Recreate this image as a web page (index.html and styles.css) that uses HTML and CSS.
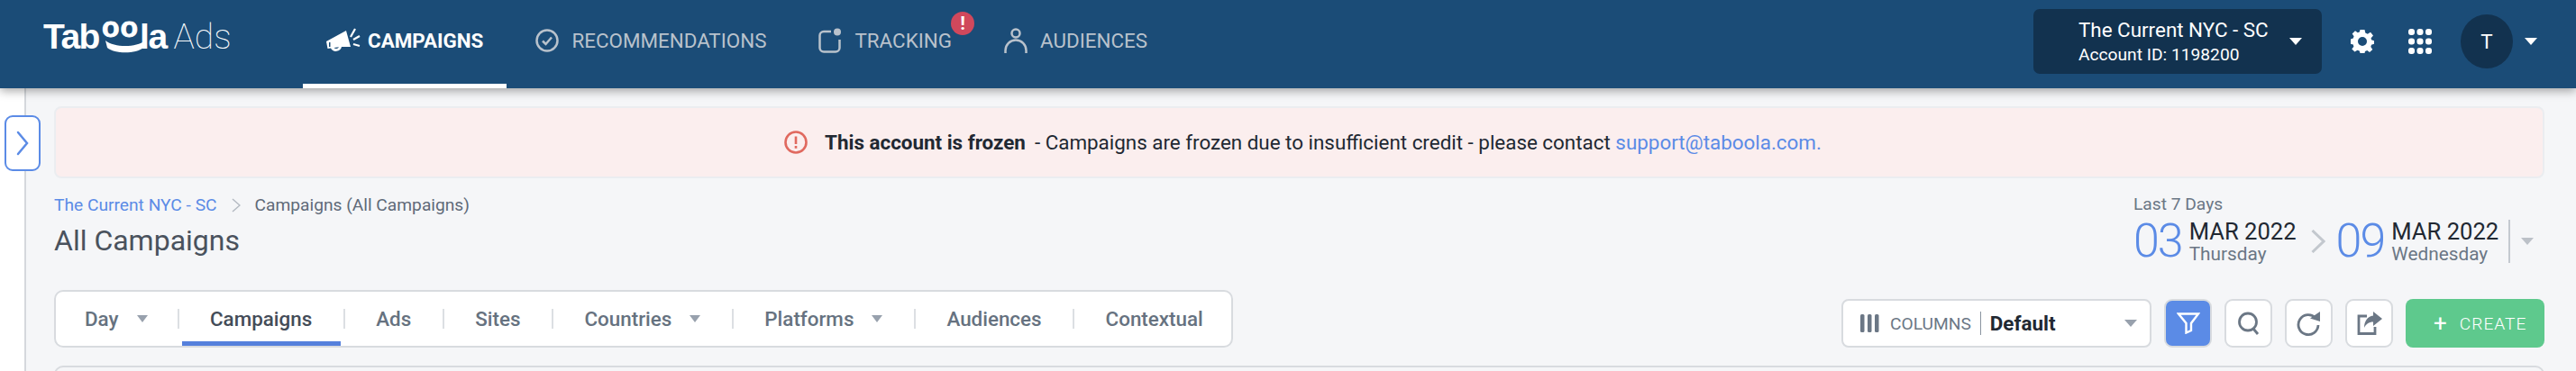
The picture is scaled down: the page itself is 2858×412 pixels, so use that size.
FILE: index.html
```html
<!DOCTYPE html>
<html lang="en">
<head>
    <meta charset="UTF-8">
    <title>Taboola Ads - Campaigns</title>
    <link rel="stylesheet" href="styles.css">
</head>
<body>
    <!-- Top Bar -->
    <header class="top-bar">
        <div class="logo">
            <span class="logo-name">Tab<span class="logo-oo">oo</span>la</span>
            <svg class="logo-smile" width="44" height="14" viewBox="0 0 44 14"><path d="M0 0 C10 8 34 8 44 0 L42 8 C34 15 10 15 2 8 Z" fill="#fff"/></svg>
            <span class="logo-ads">Ads</span>
        </div>
        <nav class="main-nav">
            <a class="nav-item active">
                <svg width="38" height="28" viewBox="0 0 38 28" fill="#fff"><path d="M0 15 L22 3 L27 21 L17 21 A6.500 6.500 0 0 1 5 22.500 L1.500 23 Z M8.500 22 A3.500 3.500 0 0 0 14 21.300 Z"/><rect x="3" y="16" width="1.500" height="5" fill="#1b4c77"/><path d="M27 10 L32 1 M30 13 L37 9 M30 18 L37 20" stroke="#fff" stroke-width="2.200" fill="none"/></svg>
                <span>CAMPAIGNS</span>
            </a>
            <a class="nav-item">
                <svg width="26" height="28" viewBox="0 0 26 28" fill="none" stroke="#b9c2cc" stroke-width="2.500"><circle cx="13" cy="14" r="11.500"/><path d="M8 14.500 L11.500 18 L18 10.500"/></svg>
                <span>RECOMMENDATIONS</span>
            </a>
            <a class="nav-item">
                <svg width="26" height="28" viewBox="0 0 26 28" fill="none" stroke="#b9c2cc" stroke-width="2.500"><path d="M14 4 H6 A4.500 4.500 0 0 0 1.500 8.500 V22 A4.500 4.500 0 0 0 6 26.500 H19 A4.500 4.500 0 0 0 23.500 22 V13"/><circle cx="21" cy="4.500" r="4" fill="#b9c2cc" stroke="none"/></svg>
                <span>TRACKING</span>
                <span class="nav-badge">!</span>
            </a>
            <a class="nav-item">
                <svg width="26" height="28" viewBox="0 0 26 28" fill="none" stroke="#b9c2cc" stroke-width="2.500"><circle cx="13" cy="6" r="4.500"/><path d="M1.500 28 V25 A11.500 11.500 0 0 1 24.500 25 V28"/></svg>
                <span>AUDIENCES</span>
            </a>
        </nav>
        <div class="top-right">
            <div class="account-box">
                <div class="account-text">
                    <div class="account-name">The Current NYC - SC</div>
                    <div class="account-id">Account ID: 1198200</div>
                </div>
                <span class="caret caret-white"></span>
            </div>
            <svg class="gear-icon" width="26" height="26" viewBox="0 0 26 26"><path fill="#fff" fill-rule="evenodd" d="M10.500 0 H15.500 L16.300 3.600 L18.800 4.700 L22 2.800 L25 6.500 L22.600 9.200 L23 11.200 L26 12.200 V15.800 L23 16.800 L22.300 19 L24.300 22 L21 25 L18.300 23 L16 24 L15.500 26 H10.500 L9.700 23.600 L7.400 22.800 L4.500 24.600 L1.300 21.500 L3.400 18.800 L2.800 16.600 L0 15.800 V10.500 L2.800 9.500 L3.600 7.200 L1.700 4.400 L5 1.300 L7.800 3.300 L9.800 2.600 Z M13 8 A5 5 0 1 0 13 18 A5 5 0 1 0 13 8 Z"/></svg>
            <svg class="grid-icon" width="26" height="28" viewBox="0 0 26 28" fill="#fff">
                <rect x="0" y="0" width="7" height="7" rx="3"/><rect x="9.500" y="0" width="7" height="7" rx="3"/><rect x="19" y="0" width="7" height="7" rx="3"/>
                <rect x="0" y="10.500" width="7" height="7" rx="3"/><rect x="9.500" y="10.500" width="7" height="7" rx="3"/><rect x="19" y="10.500" width="7" height="7" rx="3"/>
                <rect x="0" y="21" width="7" height="7" rx="3"/><rect x="9.500" y="21" width="7" height="7" rx="3"/><rect x="19" y="21" width="7" height="7" rx="3"/>
            </svg>
            <div class="avatar">T</div>
            <span class="caret caret-white"></span>
        </div>
    </header>

    <div class="page">
        <!-- Side Panel -->
        <aside class="side-panel">
            <button class="side-toggle">
                <svg width="14" height="30" viewBox="0 0 14 30" fill="none" stroke="#5b8be6" stroke-width="2.500" stroke-linecap="round"><path d="M2 3 L12 15 L2 27"/></svg>
            </button>
        </aside>

        <main class="content">
            <!-- Frozen Notice -->
            <div class="notice">
                <svg width="26" height="26" viewBox="0 0 26 26" fill="none"><circle cx="13" cy="13" r="11.500" stroke="#e0695f" stroke-width="2.600"/><path d="M13 6.500 V15" stroke="#e0695f" stroke-width="2.600"/><rect x="11.700" y="17" width="2.600" height="2.800" fill="#e0695f"/></svg>
                <b>This account is frozen</b>
                <span>- Campaigns are frozen due to insufficient credit - please contact <a>support@taboola.com.</a></span>
            </div>

            <div class="title-row">
                <div>
                    <div class="breadcrumb">
                        <a>The Current NYC - SC</a>
                        <svg width="10" height="16" viewBox="0 0 10 16" fill="none" stroke="#b4bac2" stroke-width="1.500"><path d="M1 1 L9 8 L1 15"/></svg>
                        <span>Campaigns (All Campaigns)</span>
                    </div>
                    <h1>All Campaigns</h1>
                </div>
                <div class="date-range">
                    <div class="date-label">Last 7 Days</div>
                    <div class="date-row">
                        <span class="date-day">03</span>
                        <div class="date-info">
                            <div class="date-month">MAR 2022</div>
                            <div class="date-weekday">Thursday</div>
                        </div>
                        <svg class="date-arrow" width="16" height="26" viewBox="0 0 16 26" fill="none" stroke="#c3c8ce" stroke-width="3"><path d="M1.500 1 L14 13 L1.500 25"/></svg>
                        <span class="date-day">09</span>
                        <div class="date-info">
                            <div class="date-month">MAR 2022</div>
                            <div class="date-weekday">Wednesday</div>
                        </div>
                        <span class="date-sep"></span>
                        <span class="caret caret-light"></span>
                    </div>
                </div>
            </div>

            <div class="toolbar">
                <div class="tabs">
                    <div class="tab">Day<span class="caret caret-grey"></span></div>
                    <span class="tab-sep"></span>
                    <div class="tab active">Campaigns</div>
                    <span class="tab-sep"></span>
                    <div class="tab">Ads</div>
                    <span class="tab-sep"></span>
                    <div class="tab">Sites</div>
                    <span class="tab-sep"></span>
                    <div class="tab">Countries<span class="caret caret-grey"></span></div>
                    <span class="tab-sep"></span>
                    <div class="tab">Platforms<span class="caret caret-grey"></span></div>
                    <span class="tab-sep"></span>
                    <div class="tab">Audiences</div>
                    <span class="tab-sep"></span>
                    <div class="tab">Contextual</div>
                </div>
                <div class="actions">
                    <div class="columns-select">
                        <svg width="21" height="20" viewBox="0 0 21 20" fill="#6b7785"><rect x="0" width="4.500" height="20" rx="1.500"/><rect x="8" width="4.500" height="20" rx="1.500"/><rect x="16" width="4.500" height="20" rx="1.500"/></svg>
                        <span class="columns-label">COLUMNS</span>
                        <span class="columns-sep"></span>
                        <b>Default</b>
                        <span class="caret caret-grey"></span>
                    </div>
                    <button class="icon-btn filter-btn">
                        <svg width="26" height="24" viewBox="0 0 26 24" fill="none" stroke="#fff" stroke-width="2.400"><path d="M2 1.500 H24 L16 12 V20 L10.500 22.500 V12 Z"/></svg>
                    </button>
                    <button class="icon-btn">
                        <svg width="26" height="26" viewBox="0 0 26 26" fill="none" stroke="#6b7785" stroke-width="2.800"><circle cx="12" cy="11.500" r="9.500"/><path d="M18 19 L23 25"/></svg>
                    </button>
                    <button class="icon-btn">
                        <svg width="28" height="28" viewBox="0 0 28 28" fill="none"><path d="M21 8 A11 11 0 1 0 24 16" stroke="#6b7785" stroke-width="2.800"/><path d="M15 8.500 L26 1 V12 Z" fill="#6b7785"/></svg>
                    </button>
                    <button class="icon-btn">
                        <svg width="28" height="26" viewBox="0 0 28 26" fill="none"><path d="M11 5 H2 V24.500 H20 V17" stroke="#6b7785" stroke-width="2.800"/><path d="M18 0 L28 8 L18 16 V11.500 C13 11.500 10 14 8 18 C8 11 11.500 5.500 18 4.500 Z" fill="#6b7785"/></svg>
                    </button>
                    <button class="create-btn"><span class="create-plus">+</span>CREATE</button>
                </div>
            </div>

            <div class="table-card"></div>
        </main>
    </div>
</body>
</html>
```

FILE: styles.css
```css
/* Basic reset and font setup */
* {
    margin: 0;
    padding: 0;
    box-sizing: border-box;
}

html, body {
    height: 412px;
    overflow: hidden;
}

body {
    font-family: Roboto, 'Liberation Sans', sans-serif;
    background-color: #f5f6f8;
    color: #212832;
}

button {
    font-family: inherit;
    cursor: pointer;
}

/* Carets */
.caret {
    display: inline-block;
    width: 0;
    height: 0;
    border-left: 7px solid transparent;
    border-right: 7px solid transparent;
    border-top: 8px solid #fff;
}

.caret-grey {
    border-top-color: #98a1ad;
}

.caret-light {
    border-top-color: #bcc1c8;
}

/* Top Bar */
.top-bar {
    position: relative;
    z-index: 10;
    height: 98px;
    display: flex;
    align-items: flex-start;
    padding-left: 48px;
    background-color: #1b4c77;
    box-shadow: 0 3px 10px rgba(0, 0, 0, 0.35);
}

.logo {
    position: relative;
    flex: 0 0 288px;
    height: 98px;
    display: flex;
    align-items: baseline;
    padding-top: 18px;
    color: #fff;
}

.logo-name {
    font-family: 'Liberation Sans', sans-serif;
    font-weight: 700;
    font-size: 39px;
    line-height: 46px;
    letter-spacing: -1.500px;
}

.logo-oo {
    display: inline-block;
    font-size: 32px;
    letter-spacing: 1px;
    margin: 0 1px 0 3px;
    transform: translateY(-13px);
    -webkit-text-stroke: 0.8px #fff;
}

.logo-smile {
    position: absolute;
    left: 69px;
    top: 45px;
}

.logo-ads {
    margin-left: 8px;
    font-weight: 100;
    font-size: 39px;
    line-height: 46px;
}

.main-nav {
    display: flex;
    height: 98px;
}

.nav-item {
    position: relative;
    display: flex;
    align-items: center;
    gap: 14px;
    height: 98px;
    padding: 0 26px 8px;
    margin-right: 6px;
    font-size: 22.4px;
    color: #b9c2cc;
}

.nav-item.active {
    gap: 8px;
    color: #fff;
    font-weight: 700;
    border-bottom: 5px solid #fff;
    padding-bottom: 3px;
}

.nav-badge {
    position: absolute;
    top: 13px;
    right: 1px;
    width: 26px;
    height: 26px;
    border-radius: 50%;
    background-color: #d0485c;
    color: #fff;
    font-size: 21px;
    font-weight: 700;
    line-height: 26px;
    text-align: center;
}

.top-right {
    margin-left: auto;
    display: flex;
    align-items: center;
    height: 92px;
    padding-right: 43px;
}

.account-box {
    width: 320px;
    height: 72px;
    display: flex;
    align-items: center;
    justify-content: space-between;
    padding: 0 22px 0 50px;
    border-radius: 7px;
    background-color: #12324f;
    color: #fff;
}

.account-name {
    font-size: 22.4px;
    line-height: 30px;
}

.account-id {
    font-size: 19.2px;
    line-height: 26px;
}

.gear-icon {
    margin-left: 32px;
}

.grid-icon {
    margin-left: 38px;
}

.avatar {
    width: 58px;
    height: 60px;
    margin: 0 13px 0 32px;
    border-radius: 50%;
    background-color: #12324f;
    color: #fff;
    font-size: 22.4px;
    line-height: 60px;
    text-align: center;
}

/* Page */
.page {
    display: flex;
    height: 314px;
    background-color: #f5f6f8;
}

.side-panel {
    position: relative;
    flex: 0 0 29px;
    background-color: #fff;
    border-right: 2px solid #d5d8dc;
}

.side-toggle {
    position: absolute;
    left: 5px;
    top: 30px;
    width: 40px;
    height: 62px;
    display: flex;
    align-items: center;
    justify-content: center;
    background-color: #fff;
    border: 2px solid #5b8be6;
    border-radius: 9px;
}

.content {
    flex: 1;
    min-width: 0;
    padding: 20px 35px 0 31px;
}

/* Frozen Notice */
.notice {
    height: 80px;
    display: flex;
    align-items: center;
    justify-content: center;
    padding-left: 8px;
    border: 2px solid #ebedf0;
    border-radius: 8px;
    background-color: #fbeeee;
    font-size: 22.4px;
}

.notice b {
    margin: 0 10px 0 19px;
    font-weight: 700;
}

.notice a {
    color: #5b8be6;
}

/* Title Row */
.title-row {
    display: flex;
    justify-content: space-between;
    height: 124px;
}

.breadcrumb {
    display: flex;
    align-items: center;
    gap: 16px;
    margin-top: 19px;
    font-size: 19.2px;
    line-height: 22px;
    color: #5f6a78;
}

.breadcrumb a {
    color: #5b8be6;
}

h1 {
    margin-top: 9px;
    font-size: 32px;
    font-weight: 400;
    line-height: 38px;
    color: #4a525d;
}

.date-range {
    margin-top: 18px;
    width: 458px;
}

.date-label {
    padding-left: 2px;
    font-size: 19.2px;
    line-height: 22px;
    color: #6b7785;
}

.date-row {
    display: flex;
    align-items: center;
    margin-top: 5px;
    height: 50px;
    white-space: nowrap;
}

.date-day {
    margin-left: 2px;
    font-size: 52px;
    font-weight: 300;
    line-height: 50px;
    letter-spacing: -2px;
    color: #5b8be6;
}

.date-info {
    margin-left: 8px;
}

.date-month {
    font-size: 25.6px;
    line-height: 28px;
    color: #212832;
}

.date-weekday {
    font-size: 20.8px;
    line-height: 22px;
    color: #6b7785;
}

.date-arrow {
    margin: 0 10px 0 16px;
}

.date-sep {
    width: 2px;
    height: 48px;
    margin: 0 12px 0 11px;
    background-color: #c4c9d0;
}

/* Toolbar */
.toolbar {
    display: flex;
    justify-content: space-between;
    height: 64px;
}

.tabs {
    display: flex;
    align-items: stretch;
    height: 64px;
    background-color: #fff;
    border: 2px solid #d8dbdf;
    border-radius: 10px;
}

.tab {
    position: relative;
    display: flex;
    align-items: center;
    gap: 20px;
    padding: 0 34.500px;
    font-size: 22.4px;
    font-weight: 500;
    color: #667280;
}

.tab:first-child {
    padding: 0 33px 0 32px;
}

.tab:last-child {
    padding-right: 31px;
}

.tab .caret {
    border-left-width: 6.500px;
    border-right-width: 6.500px;
}

.tab.active {
    color: #444c58;
}

.tab.active::after {
    content: "";
    position: absolute;
    left: 3px;
    right: 3px;
    bottom: 0;
    height: 5px;
    background-color: #5580dc;
}

.tab-sep {
    width: 2px;
    height: 22px;
    align-self: center;
    background-color: #dcdfe3;
}

.actions {
    display: flex;
    gap: 14px;
    margin-top: 10px;
}

.columns-select {
    width: 344px;
    height: 54px;
    display: flex;
    align-items: center;
    padding: 0 14px 0 19px;
    background-color: #fff;
    border: 2px solid #d8dbdf;
    border-radius: 8px;
    font-size: 19.2px;
    color: #6b7785;
}

.columns-label {
    margin-left: 12px;
}

.columns-sep {
    width: 1px;
    height: 26px;
    margin: 0 10px;
    background-color: #8a94a0;
}

.columns-select b {
    font-size: 22.4px;
    font-weight: 700;
    color: #212832;
}

.columns-select .caret {
    margin-left: auto;
}

.icon-btn {
    width: 53px;
    height: 54px;
    display: flex;
    align-items: center;
    justify-content: center;
    background-color: #fff;
    border: 2px solid #d8dbdf;
    border-radius: 9px;
}

.filter-btn {
    background-color: #5b8be6;
}

.create-btn {
    width: 154px;
    height: 54px;
    padding-left: 18px;
    display: flex;
    align-items: center;
    border: none;
    border-radius: 8px;
    background-color: #5ec98d;
    color: #fff;
    font-size: 19.2px;
    font-weight: 300;
    letter-spacing: 1px;
}

.create-plus {
    margin: 0 13px;
    font-size: 26px;
    font-weight: 400;
    line-height: 26px;
}

.table-card {
    height: 20px;
    margin-top: 20px;
    background-color: #f5f6f8;
    border: 2px solid #d8dbdf;
    border-radius: 10px 10px 0 0;
}
```
